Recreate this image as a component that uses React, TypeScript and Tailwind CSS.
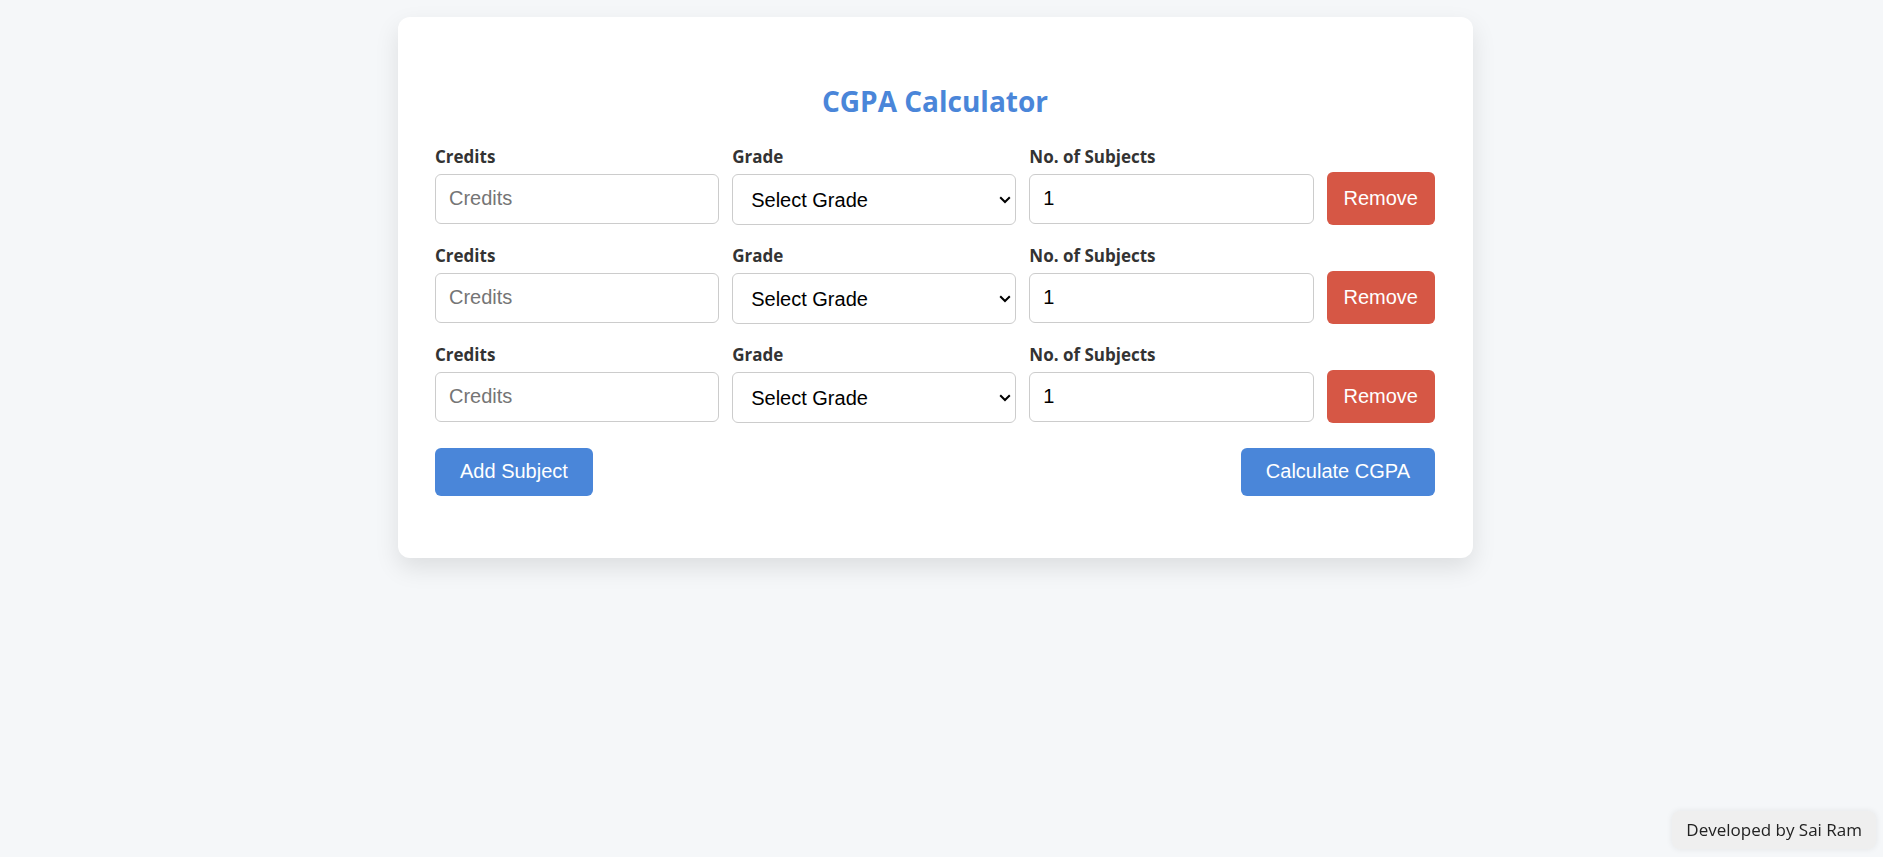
import { useState } from "react";

const grades = ["O", "A+", "A", "B+", "B", "C"];

const labelClass = "text-[17px] leading-6 font-bold text-[#333333]";
const fieldClass =
  "w-full rounded-md border border-[#cccccc] bg-white text-xl text-black font-['Liberation_Sans',Arial,sans-serif] placeholder:text-[#757575]";
const inputClass = "h-[50px] px-[13px] pb-[2px]";
const actionClass =
  "h-12 cursor-pointer rounded-md bg-[#4a86d9] px-[25px] pb-[2px] text-xl text-white font-['Liberation_Sans',Arial,sans-serif]";

function SubjectRow({ id, onRemove }: { id: number; onRemove: () => void }) {
  return (
    <div className="flex items-end gap-[13px]">
      <div className="flex min-w-0 flex-1 flex-col gap-[5px] self-start">
        <label htmlFor={`credits-${id}`} className={labelClass}>
          Credits
        </label>
        <input id={`credits-${id}`} type="text" inputMode="numeric" placeholder="Credits" className={`${fieldClass} ${inputClass}`} />
      </div>
      <div className="flex min-w-0 flex-1 flex-col gap-[5px]">
        <label htmlFor={`grade-${id}`} className={labelClass}>
          Grade
        </label>
        <div className="relative">
          <select id={`grade-${id}`} defaultValue="" className={`${fieldClass} block h-[51px] appearance-none pr-6 pl-[18px]`}>
            <option value="">Select Grade</option>
            {grades.map((grade) => (
              <option key={grade} value={grade}>
                {grade}
              </option>
            ))}
          </select>
          <svg
            aria-hidden="true"
            viewBox="0 0 12 8"
            className="pointer-events-none absolute top-[22px] right-[5px] h-2 w-3"
            fill="none"
            stroke="black"
            strokeWidth="2"
          >
            <path d="M1.2 1.2 6 6l4.8-4.8" />
          </svg>
        </div>
      </div>
      <div className="flex min-w-0 flex-1 flex-col gap-[5px] self-start">
        <label htmlFor={`count-${id}`} className={labelClass}>
          No. of Subjects
        </label>
        <input id={`count-${id}`} type="text" inputMode="numeric" defaultValue="1" className={`${fieldClass} ${inputClass}`} />
      </div>
      <button
        type="button"
        onClick={onRemove}
        className="h-[53px] cursor-pointer rounded-md bg-[#d65745] px-[17px] pb-[2px] text-xl text-white font-['Liberation_Sans',Arial,sans-serif]"
      >
        Remove
      </button>
    </div>
  );
}

export default function App() {
  const [rows, setRows] = useState([1, 2, 3]);

  return (
    <div className="min-h-screen bg-[#f5f7f9] pt-[17px] pr-3 font-['Open_Sans','Noto_Sans',sans-serif]">
      <main className="mx-auto max-w-[1075px] rounded-xl bg-white pt-[60px] pr-[38px] pb-[62px] pl-[37px] shadow-[0_10px_25px_rgba(0,0,0,0.1)]">
        <h1 className="text-center text-[28px] leading-12 font-bold text-[#4a86d9]">CGPA Calculator</h1>
        <div className="mt-5 flex flex-col gap-[19px]">
          {rows.map((id) => (
            <SubjectRow key={id} id={id} onRemove={() => setRows(rows.filter((row) => row !== id))} />
          ))}
        </div>
        <div className="mt-[25px] flex justify-between">
          <button type="button" className={actionClass} onClick={() => setRows([...rows, Math.max(0, ...rows) + 1])}>
            Add Subject
          </button>
          <button type="button" className={actionClass}>
            Calculate CGPA
          </button>
        </div>
      </main>
      <footer className="fixed right-[7px] bottom-2 rounded-lg bg-[#efefef] px-[14px] py-[7px] text-[17px] leading-6 text-[#222222] shadow-[0_0_6px_rgba(0,0,0,0.08)]">
        Developed by Sai Ram
      </footer>
    </div>
  );
}
